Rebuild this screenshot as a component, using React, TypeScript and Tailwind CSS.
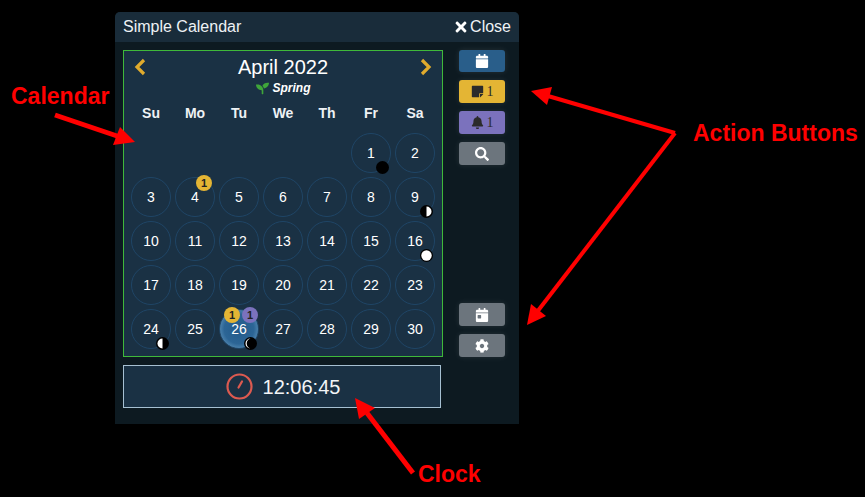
import React from "react";
import { FaCalendar, FaStickyNote, FaBell, FaSearch, FaCalendarDay, FaCog, FaTimes, FaSeedling } from "react-icons/fa";

type Moon = "new" | "first" | "full" | "last" | "cres";
const moons: Record<number, Moon> = { 1: "new", 9: "first", 16: "full", 24: "last", 26: "cres" };

function MoonIcon({ kind }: { kind: Moon }) {
  return (
    <svg className="absolute left-[24px] top-[27px]" width="13" height="13" viewBox="0 0 13 13">
      <circle cx="6.5" cy="6.5" r="6.5" fill="#000000" />
      {kind === "full" && <circle cx="6.5" cy="6.5" r="5.2" fill="#ffffff" />}
      {kind === "first" && <path d="M6.5 1.5a5 5 0 0 1 0 10z" fill="#fff" />}
      {kind === "last" && <path d="M6.5 1.5a5 5 0 0 0 0 10z" fill="#fff" />}
      {kind === "cres" && <path d="M6.5 1.5a5 5 0 0 0 0 10a6.5 5.5 0 0 1 0-10z" fill="#fff" />}
    </svg>
  );
}

function Badge({ color, cls }: { color: string; cls: string }) {
  return (
    <span className={`absolute flex h-[16px] w-[16px] items-center justify-center rounded-full text-[11px] font-bold text-[#222] ${color} ${cls}`}>1</span>
  );
}

function Day({ d }: { d: number }) {
  const today = d === 26;
  return (
    <div
      className={
        today
          ? "relative flex h-[40px] w-[40px] items-center justify-center rounded-full border border-[#1f4566] bg-[radial-gradient(circle,#235a8a_0%,#2c6595_55%,#6fa3c8_92%,#1f4566_100%)] text-[14px] text-white"
          : "relative flex h-[40px] w-[40px] items-center justify-center rounded-full border border-[#1f4566] text-[14px] text-white"
      }
    >
      {d}
      {d === 4 && <Badge color="bg-[#e4b534]" cls="left-[20px] top-[-3px]" />}
      {today && <Badge color="bg-[#e4b534]" cls="left-[4px] top-[-3px]" />}
      {today && <Badge color="bg-[#7b72bd]" cls="left-[22px] top-[-3px]" />}
      {moons[d] && <MoonIcon kind={moons[d]} />}
    </div>
  );
}

function Btn({ bg, h, children }: { bg: string; h: string; children: React.ReactNode }) {
  return (
    <div className={`flex w-[46px] items-center justify-center gap-[3px] rounded-[3px] shadow-[0_0_6px_rgba(255,255,255,0.1)] ${bg} ${h}`}>
      {children}
    </div>
  );
}

function Chevron({ left }: { left?: boolean }) {
  return (
    <svg width="12" height="18" viewBox="0 0 12 18" fill="none" stroke="#e0ab2d" strokeWidth="3.2">
      <path d={left ? "M10 2L3 9L10 16" : "M2 2L9 9L2 16"} />
    </svg>
  );
}

export default function App() {
  const days = Array.from({ length: 30 }, (_, i) => i + 1);
  return (
    <div className="relative h-[497px] w-[865px] overflow-hidden bg-black pl-[115px] pt-[12px] font-['Liberation_Sans',sans-serif]">
      <div className="flex h-[412px] w-[404px] flex-col rounded-t-[5px] bg-[#0d1a21]">
        <div className="flex h-[30px] items-center justify-between rounded-t-[5px] bg-[#192c3a] pl-[8px] pr-[8px] text-[16px] text-[#eef2f5]">
          <span>Simple Calendar</span>
          <span className="flex items-center gap-[1px]"><FaTimes className="text-[16px] text-white" />Close</span>
        </div>
        <div className="flex gap-[16px] pl-[8px] pt-[8px]">
          <div className="flex w-[320px] flex-col">
            <div className="h-[307px] w-[320px] border border-[#3fb93a] bg-[#1a3144] px-[7px]">
              <div className="flex h-[30px] items-center justify-between px-[3px] pt-[2px]">
                <Chevron left />
                <span className="text-[20px] leading-none text-white">April 2022</span>
                <Chevron />
              </div>
              <div className="mt-[1px] flex h-[12px] items-center justify-center gap-[4px] text-[12px] font-bold italic text-white">
                <FaSeedling className="text-[13px] text-[#3fa53a]" />Spring
              </div>
              <div className="mt-[7px] grid h-[24px] grid-cols-[repeat(7,40px)] items-center gap-x-[4px] text-center text-[14px] font-bold text-[#eef2f5]">
                {["Su", "Mo", "Tu", "We", "Th", "Fr", "Sa"].map((w) => (
                  <span key={w}>{w}</span>
                ))}
              </div>
              <div className="mt-[8px] grid grid-cols-[repeat(7,40px)] gap-[4px]">
                {Array.from({ length: 5 }).map((_, i) => <div key={i} className="h-[40px]" />)}
                {days.map((d) => <Day key={d} d={d} />)}
              </div>
            </div>
            <div className="mt-[8px] flex h-[43px] w-[318px] items-center justify-center gap-[10px] border border-[#a6c0d2] bg-[#1a3144] pl-[2px] text-[20px] text-[#f2f5f7]">
              <svg width="27" height="27" viewBox="0 0 27 27" fill="none" stroke="#dc5a50" strokeWidth="2.2">
                <circle cx="13.5" cy="13.5" r="12" />
                <path d="M12.5 14.5L16 8.5" strokeLinecap="round" />
              </svg>
              <span>12:06:45</span>
            </div>
          </div>
          <div className="flex h-[307px] flex-col justify-between">
            <div className="flex flex-col gap-[8px]">
              <Btn bg="bg-[#295e8a]" h="h-[22px]"><FaCalendar className="text-[14px] text-white" /></Btn>
              <Btn bg="bg-[#e4b534]" h="h-[23px]"><FaStickyNote className="text-[13px] text-[#2b2b2b]" /><span className="font-['Liberation_Serif',serif] text-[14px] text-[#2b2b2b]">1</span></Btn>
              <Btn bg="bg-[#7b72bd]" h="h-[23px]"><FaBell className="text-[13px] text-[#2b2b2b]" /><span className="font-['Liberation_Serif',serif] text-[14px] text-[#2b2b2b]">1</span></Btn>
              <Btn bg="bg-[#6c757d]" h="h-[23px]"><FaSearch className="text-[14px] text-white" /></Btn>
            </div>
            <div className="flex flex-col gap-[8px]">
              <Btn bg="bg-[#6c757d]" h="h-[23px]"><FaCalendarDay className="text-[14px] text-white" /></Btn>
              <Btn bg="bg-[#6c757d]" h="h-[23px]"><FaCog className="text-[14px] text-white" /></Btn>
            </div>
          </div>
        </div>
      </div>

      <span className="absolute left-[11px] top-[79px] text-[23px] font-bold text-[#ff0000]">Calendar</span>
      <span className="absolute left-[693px] top-[116px] text-[23px] font-bold text-[#ff0000]">Action Buttons</span>
      <span className="absolute left-[418px] top-[457px] text-[23px] font-bold text-[#ff0000]">Clock</span>
      <svg className="pointer-events-none absolute left-0 top-0" width="865" height="497" viewBox="0 0 865 497">
        <g stroke="#ff0000" fill="none">
          <path d="M55 115L120 137" strokeWidth="5" />
          <path d="M675 133L548 96" strokeWidth="4" />
          <path d="M675 133L537 312" strokeWidth="4" />
          <path d="M413 473L367 413" strokeWidth="5" />
        </g>
        <g fill="#ff0000">
          <path d="M135 142L113 145L120 127z" />
          <path d="M531 91L552 87L547 105z" />
          <path d="M527 325L531 304L546 316z" />
          <path d="M355 398L375 408L359 419z" />
        </g>
      </svg>
    </div>
  );
}
